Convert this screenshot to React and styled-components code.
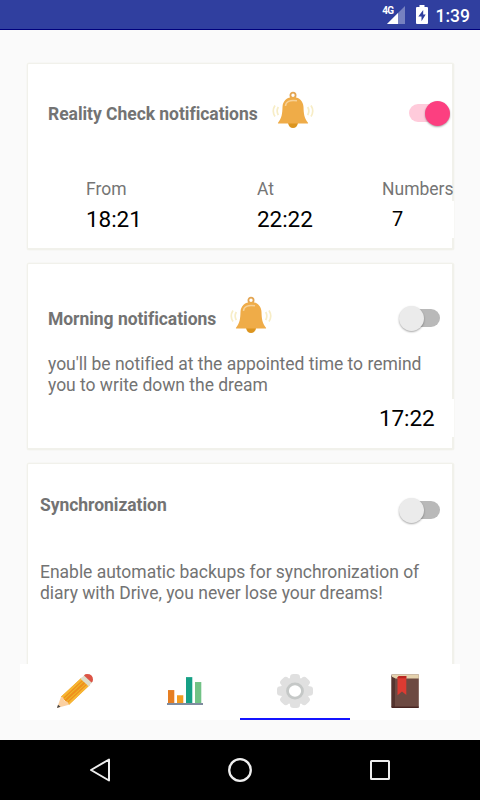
import React, { useState } from 'react';
import styled, { createGlobalStyle } from 'styled-components';

const GlobalStyle = createGlobalStyle`
	* {
		box-sizing: border-box;
	}
	body {
		margin: 0;
		background-color: #fafafa;
		font-family: Roboto, 'Liberation Sans', sans-serif;
	}
`;
const Screen = styled.div`
	display: flex;
	flex-direction: column;
	width: 480px;
	height: 800px;
	overflow: hidden;
	background-color: #fafafa;
`;
const StatusBar = styled.header`
	display: flex;
	justify-content: flex-end;
	align-items: center;
	height: 30px;
	padding-right: 10px;
	background-color: #303f9f;
	border-bottom: 1px solid #00007c;
	color: #fff;
`;
const Clock = styled.span`
	margin-left: 8px;
	padding-top: 3px;
	font-size: 17.5px;
	font-weight: 500;
	line-height: 20px;
`;
const Signal = styled.div`
	display: flex;
	align-items: flex-start;
	height: 18px;
	margin: 1px 11px 0 0;
`;
const Network = styled.span`
	margin-right: -7px;
	font-size: 10px;
	font-weight: 700;
	line-height: 10px;
	letter-spacing: -0.6px;
	z-index: 1;
`;
const List = styled.main`
	flex: 0 0 634px;
	display: flex;
	flex-direction: column;
	gap: 13px;
	padding: 33px 26px 0 27px;
	overflow: hidden;
`;
const Card = styled.section`
	flex: 0 0 ${props => props.$height || 187}px;
	display: flex;
	flex-direction: column;
	padding: ${props => props.$padding};
	background-color: #fff;
	border: solid #f1f1eb;
	border-width: 1px 2px 2px 1px;
	border-radius: 2px;
	box-shadow: 0 0 0 0.5px #f4f4ef;
`;
const Row = styled.div`
	display: flex;
	align-items: flex-start;
	height: ${props => props.$height}px;
`;
const Title = styled.h2`
	margin: ${props => props.$top || 0}px 0 0;
	font-size: 17.5px;
	font-weight: 700;
	line-height: 20px;
	letter-spacing: -0.04px;
	color: #737373;
	white-space: nowrap;
`;
const Bell = styled.svg`
	width: 42px;
	height: 40px;
	margin-left: 14px;
`;
const Text = styled.p`
	margin: 0;
	font-size: 17.5px;
	line-height: 20.5px;
	letter-spacing: -0.02px;
	color: #737373;
	white-space: pre-line;
`;
const Toggle = styled.button`
	display: flex;
	align-items: center;
	justify-content: ${props => (props.$on ? 'flex-end' : 'flex-start')};
	width: 38px;
	height: 18px;
	margin: ${props => props.$top}px ${props => props.$right}px 0 auto;
	padding: 0;
	border: 0;
	border-radius: 9px;
	background-color: ${props => (props.$on ? '#ffcbdb' : '#b9b9b9')};
`;
const Thumb = styled.span`
	flex: none;
	width: 25px;
	height: 25px;
	margin: 0 -3px;
	border-radius: 50%;
	background-color: ${props => (props.$on ? '#fc3f80' : '#ebebeb')};
	box-shadow: 0 1px 2px rgba(0, 0, 0, 0.35);
`;
const Schedule = styled.div`
	display: grid;
	grid-template-columns: 171px 125px 72px;
	margin-right: -2px;
	padding-left: 38px;
`;
const Field = styled.div`
	display: flex;
	flex-direction: column;
`;
const Label = styled.span`
	height: 22px;
	font-size: 17.5px;
	line-height: 20px;
	color: #757575;
`;
const Time = styled.time`
	padding-top: 5px;
	font-size: 22.5px;
	line-height: 26px;
	letter-spacing: -0.05px;
	color: #000;
`;
const Count = styled.span`
	height: 37px;
	padding: 5px 0 0 10px;
	background-color: #fff;
	font-size: 20px;
	line-height: 26px;
	color: #000;
`;
const Alarm = styled.time`
	align-self: flex-end;
	width: 75px;
	height: 38px;
	margin: 4px -2px 0 0;
	padding-top: 6px;
	background-color: #fff;
	font-size: 22.5px;
	line-height: 26px;
	letter-spacing: -0.1px;
	color: #000;
`;
const Tabs = styled.nav`
	flex: 0 0 56px;
	display: grid;
	grid-template-columns: repeat(4, 110px);
	margin: 0 20px 20px;
	background-color: #fff;
`;
const Tab = styled.button`
	display: flex;
	justify-content: center;
	padding: 9.5px 0 0;
	border: 0;
	border-bottom: 2px solid ${props => (props.$active ? '#1414ff' : '#fff')};
	background: none;
`;
const TabIcon = styled.svg.attrs({ viewBox: '0 0 36 36', preserveAspectRatio: 'none' })`
	width: 36px;
	height: 34px;
`;
const NavBar = styled.footer`
	flex: 0 0 60px;
	display: flex;
	justify-content: space-between;
	align-items: center;
	padding: 0 85px;
	background-color: #000;
`;

const BellIcon = () => (
	<Bell viewBox="0 0 42 40" fill="none">
		<circle cx="21" cy="5.2" r="2.6" stroke="#e3a552" strokeWidth="1.8" />
		<path d="M16 33h10c-.4 3-2.5 5-5 5s-4.600-2-5-5z" fill="#dc951f" />
		<path
			d="M21 7c-6 0-10.300 4-10.500 10-.2 7-.7 11-4.500 15.800-.3.500 0 .8.500.8h29c.500 0 .8-.3.500-.8-3.800-4.800-4.300-8.800-4.500-15.800C31.300 11 27 7 21 7z"
			fill="#efac48"
		/>
		<path d="M13.500 16c.3-4 4-6.500 11.500-5.200" stroke="#f7d196" strokeWidth="1.500" />
		<path
			d="M6.300 17q-2.300 4 0 8.200M3 15.500q-3.500 5.500 0 11M35.700 17q2.300 4 0 8.200M39 15.500q3.500 5.500 0 11"
			stroke="#f7edc6"
			strokeWidth="1.700"
		/>
	</Bell>
);

const PencilIcon = () => (
	<TabIcon>
		<path d="M24.500 4l8 8L12 32.500 4 24z" fill="#f0901e" />
		<path d="M24.500 4l1.500 1.500L5.600 25.600 4 24zM31 10.500l1.500 1.500L12 32.500l-1.500-1.500z" fill="#f6b733" />
		<path d="M7.200 26.800L27.500 6.700M9.500 29.300L30 9" stroke="#ecb92a" strokeWidth="1.100" />
		<path d="M4 24l2.300 1 .8 3.500 3.300.8 1.600 3.200L0 36z" fill="#fbd0a1" />
		<path d="M1 32.500l2.500 2.300L0 36z" fill="#444" />
		<path d="M23.500 5L28 0.500l7.700 7.700-4.200 4.800z" fill="#deddca" />
		<path d="M27 1.500Q28 0 30 0q3 0 4.500 1.500T36 6q0 2-1.500 3z" fill="#dc5446" />
	</TabIcon>
);

const ChartIcon = () => (
	<TabIcon>
		<path d="M1 17h6.300v14H1z" fill="#e67e22" />
		<path d="M10 22.500h6.300V31H10z" fill="#f39c1f" />
		<path d="M19 3.300h6.300V31H19z" fill="#16a085" />
		<path d="M28 8.500h6.300V31H28z" fill="#71c285" />
		<path d="M0 30.700h36v2H0z" fill="#7f8c9f" />
	</TabIcon>
);

const GearIcon = () => (
	<TabIcon>
		<circle cx="18" cy="18" r="14.500" fill="#e0e0e0" />
		{[0, 45, 90, 135, 180, 225, 270, 315].map(angle => (
			<rect
				key={angle}
				x="13"
				y="0"
				width="10"
				height="10"
				rx="3.500"
				fill="#e0e0e0"
				transform={`rotate(${angle} 18 18)`}
			/>
		))}
		<circle cx="18" cy="18" r="7.500" fill="#fff" stroke="#c5c8c7" strokeWidth="2.800" />
	</TabIcon>
);

const BookIcon = () => (
	<TabIcon>
		<path d="M4.500 0.500h27.300V35H4.500z" fill="#6d4a42" />
		<path d="M4.500 2H8v33H4.500z" fill="#54342f" />
		<path d="M5 0.500h26.800v4.300H8.500L5 3z" fill="#e5d2ae" />
		<path d="M4.500 34.500h27.300V36H4.500z" fill="#482522" />
		<path d="M10.500 3.500L12 2h7.300v20.300L15 18.500l-4.500 4z" fill="#dc3b32" />
		<path d="M10.500 3.500L12 2h7.300v2.500h-8.800z" fill="#b92620" />
	</TabIcon>
);

const Switch = ({ initial = false, top, right }) => {
	const [on, setOn] = useState(initial);
	return (
		<Toggle $on={on} $top={top} $right={right} onClick={() => setOn(!on)}>
			<Thumb $on={on} />
		</Toggle>
	);
};

const times = [
	{ label: 'From', value: '18:21' },
	{ label: 'At', value: '22:22' },
];

const tabs = [
	{ name: 'write', Icon: PencilIcon },
	{ name: 'stats', Icon: ChartIcon },
	{ name: 'settings', Icon: GearIcon },
	{ name: 'diary', Icon: BookIcon },
];

const App = () => {
	const [active, setActive] = useState('settings');
	return (
		<Screen>
			<GlobalStyle />
			<StatusBar>
				<Signal>
					<Network>4G</Network>
					<svg width="18" height="18" viewBox="0 0 18 18">
						<path d="M18 0v18H0z" fill="#7681c0" />
						<path d="M11 7v11H0z" fill="#fff" />
					</svg>
				</Signal>
				<svg width="12" height="19" viewBox="0 0 12 19">
					<path d="M3.500 0h5v2H11q1 0 1 1v15q0 1-1 1H1q-1 0-1-1V3q0-1 1-1h2.500z" fill="#fff" />
					<path d="M7.200 5L2.300 11.500H5.500V16.200L9.700 9.500H7.200z" fill="#303f9f" />
				</svg>
				<Clock>1:39</Clock>
			</StatusBar>
			<List>
				<Card $padding="26px 0 0 20px">
					<Row $height={89}>
						<Title $top={14}>Reality Check notifications</Title>
						<BellIcon />
						<Switch initial top={14} right={5} />
					</Row>
					<Schedule>
						{times.map(({ label, value }) => (
							<Field key={label}>
								<Label>{label}</Label>
								<Time>{value}</Time>
							</Field>
						))}
						<Field>
							<Label>Numbers</Label>
							<Count>7</Count>
						</Field>
					</Schedule>
				</Card>
				<Card $padding="31px 0 0 20px">
					<Row $height={59}>
						<Title $top={14}>Morning notifications</Title>
						<BellIcon />
						<Switch top={14} right={12} />
					</Row>
					<Text>{"you'll be notified at the appointed time to remind\nyou to write down the dream"}</Text>
					<Alarm>17:22</Alarm>
				</Card>
				<Card $height={240} $padding="31px 0 0 12px">
					<Row $height={67}>
						<Title>Synchronization</Title>
						<Switch top={6} right={12} />
					</Row>
					<Text>{'Enable automatic backups for synchronization of\ndiary with Drive, you never lose your dreams!'}</Text>
				</Card>
			</List>
			<Tabs>
				{tabs.map(({ name, Icon }) => (
					<Tab key={name} $active={name === active} onClick={() => setActive(name)}>
						<Icon />
					</Tab>
				))}
			</Tabs>
			<NavBar>
				<svg width="30" height="30" viewBox="0 0 30 30" fill="none" stroke="#eee" strokeWidth="2">
					<path d="M24 4.500v21L6 15z" strokeLinejoin="round" />
				</svg>
				<svg width="30" height="30" viewBox="0 0 30 30" fill="none" stroke="#eee" strokeWidth="2.300">
					<circle cx="15" cy="15" r="10.800" />
				</svg>
				<svg width="30" height="30" viewBox="0 0 30 30" fill="none" stroke="#eee" strokeWidth="2">
					<rect x="6" y="6" width="18" height="18" rx="0.500" />
				</svg>
			</NavBar>
		</Screen>
	);
};

export default App;
